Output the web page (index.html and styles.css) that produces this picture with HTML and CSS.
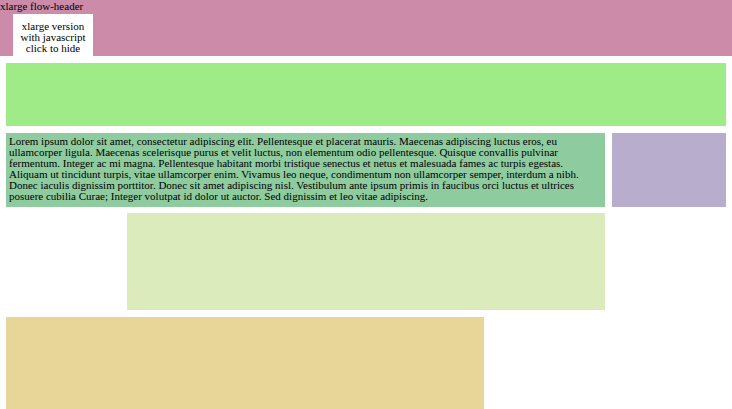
FILE: index.html
```html
<!DOCTYPE html>
<html>
<head>
<meta charset="utf-8">
<link rel="stylesheet" href="styles.css">
</head>
<body>
<header class="flow-header">
  <div class="header-label">xlarge flow-header</div>
  <div class="js-box">xlarge version<br>with javascript<br>click to hide</div>
</header>
<main class="layout">
  <div class="banner"></div>
  <div class="content-row">
    <div class="text-block">Lorem ipsum dolor sit amet, consectetur adipiscing elit. Pellentesque et placerat mauris. Maecenas adipiscing luctus eros, eu ullamcorper ligula. Maecenas scelerisque purus et velit luctus, non elementum odio pellentesque. Quisque convallis pulvinar fermentum. Integer ac mi magna. Pellentesque habitant morbi tristique senectus et netus et malesuada fames ac turpis egestas. Aliquam ut tincidunt turpis, vitae ullamcorper enim. Vivamus leo neque, condimentum non ullamcorper semper, interdum a nibh. Donec iaculis dignissim porttitor. Donec sit amet adipiscing nisl. Vestibulum ante ipsum primis in faucibus orci luctus et ultrices posuere cubilia Curae; Integer volutpat id dolor ut auctor. Sed dignissim et leo vitae adipiscing.</div>
    <div class="side-block"></div>
  </div>
  <div class="offset-row">
    <div class="offset-block"></div>
  </div>
  <div class="bottom-block"></div>
</main>
</body>
</html>
```
FILE: styles.css
```css
html, body {
  margin: 0;
  padding: 0;
  background: #ffffff;
}
body {
  font-family: "Liberation Serif", "Times New Roman", serif;
  font-size: 11px;
  color: #000;
}
.flow-header {
  background: #cc8ba8;
  height: 56px;
  display: flex;
  flex-direction: column;
  align-items: flex-start;
}
.header-label {
  line-height: 12px;
  height: 14px;
}
.js-box {
  background: #ffffff;
  margin-left: 13px;
  width: 80px;
  height: 42px;
  box-sizing: border-box;
  padding-top: 7px;
  text-align: center;
  line-height: 11px;
}
.layout {
  padding: 7px 6px 0;
  display: flex;
  flex-direction: column;
  gap: 7px;
}
.banner {
  background: #9feb88;
  height: 63px;
}
.content-row {
  display: flex;
  gap: 7px;
}
.text-block {
  background: #8ecb9e;
  width: 599px;
  height: 74px;
  box-sizing: border-box;
  padding: 3px 3px;
  line-height: 11px;
}
.side-block {
  background: #b8adcd;
  flex: 1;
  height: 74px;
}
.offset-row {
  display: flex;
  padding-left: 121px;
  margin-top: -1px;
}
.offset-block {
  background: #dcebbb;
  width: 478px;
  height: 97px;
}
.bottom-block {
  background: #e8d698;
  width: 478px;
  height: 100px;
}
```
